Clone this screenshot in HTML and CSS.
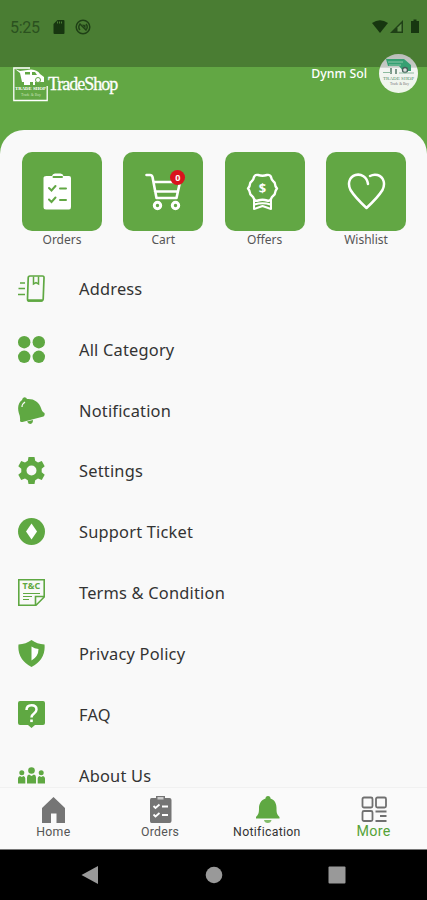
FILE: index.html
```html
<!DOCTYPE html>
<html lang="en">
<head>
    <meta charset="UTF-8">
    <meta name="viewport" content="width=device-width, initial-scale=1.0">
    <title>TradeShop</title>
    <link rel="stylesheet" href="styles.css">
</head>
<body>

    <div class="status-bar">
        <span class="time">5:25</span>
        <svg class="sd" width="12" height="14" viewBox="0 0 12 14"><path d="M4.500 0H10.500Q11.500 0 11.500 1V13Q11.500 14 10.500 14H1.500Q.5 14 .5 13V4Z" fill="#173610"/><path d="M4.500 1.500v2M6.500 1.500v2M8.500 1.500v2" stroke="#4a7d33"/></svg>
        <svg class="sync" width="16" height="16" viewBox="0 0 16 16" fill="none" stroke="#1f4016" stroke-width="1.500"><circle cx="8" cy="8" r="6.800"/><path d="M5 11A4 4 0 0 1 5.500 4.800M11 5A4 4 0 0 1 10.500 11.200M4.500 4.500L11.500 11.500"/><path d="M7 5.500L10.500 6V9.500Z" fill="#1f4016" stroke="none"/></svg>
        <svg class="signals" width="48" height="16" viewBox="0 0 48 16">
            <path d="M0 4Q8 -1.500 16 4L8 14Z" fill="#173610"/>
            <path d="M18 14L31 1V14Z" fill="#1f4016"/>
            <path d="M25.500 8.500L29.500 4.500V12.500H25.500Z" fill="#5c8b46"/>
            <path d="M39 2h2.500V.5h3V2H47V14H39Z" fill="#173610"/>
        </svg>
    </div>

    <header>
        <div class="logo">
            <svg width="35" height="35" viewBox="0 0 35 35">
                <path d="M17 1H.8V33.500H34.200V19" fill="none" stroke="#fff" stroke-width="1.300"/>
                <path d="M2 2L7 4L18 2.500Q25 3 27 7L31 10V15H9L7 6Z" fill="#fff"/>
                <path d="M12 5h5v2.500h-5zM19 5h3l2 3h-5z" fill="#62a744"/>
                <circle cx="25" cy="13" r="2.500" fill="#fff" stroke="#62a744"/>
                <path d="M11 14h6v4h-6zM20 14h2v4h-2z" fill="#fff"/>
                <text x="2" y="22.500" textLength="31" lengthAdjust="spacingAndGlyphs" class="logo-name">TRADE SHOP</text>
                <text x="8" y="28.500" textLength="20" lengthAdjust="spacingAndGlyphs" class="logo-tag">Trade &amp; Buy</text>
            </svg>
            <span>TradeShop</span>
        </div>
        <span class="user">Dynm Sol</span>
        <svg class="avatar" width="39" height="39" viewBox="0 0 39 39">
            <defs>
                <clipPath id="round"><circle cx="19.500" cy="19.500" r="19.500"/></clipPath>
                <linearGradient id="shade" x2="0" y2="1"><stop offset="0" stop-color="#babdba"/><stop offset=".34" stop-color="#c7cbc7"/><stop offset=".36" stop-color="#f3f5f3"/><stop offset="1" stop-color="#eef5ea"/></linearGradient>
            </defs>
            <g clip-path="url(#round)">
                <rect width="39" height="39" fill="url(#shade)"/>
                <path d="M7 5H25L32 11V17H24L20 12H9Z" fill="#35a072"/>
                <path d="M9 8h15M10 11h12" stroke="#8fc5a9"/>
                <path d="M12 14v6M17 15v5" stroke="#567a6a" stroke-width="1.500"/>
                <circle cx="26" cy="16" r="2.500" fill="#ddd" stroke="#46605a" stroke-width="1.300"/>
                <path d="M4 18.500h8M20 19h15" stroke="#8dbb9f"/>
                <text x="4" y="25.500" textLength="31" lengthAdjust="spacingAndGlyphs" class="avatar-name">TRADE SHOP</text>
                <text x="11" y="31" textLength="19" lengthAdjust="spacingAndGlyphs" class="avatar-tag">Trade &amp; Buy</text>
            </g>
        </svg>
    </header>

    <main>
        <div class="tiles">
            <div class="tile">
                <div class="box">
                    <svg width="40" height="40" viewBox="0 0 40 40"><path d="M4.500 4H10Q10.500 1.500 13 1.500H18.500Q21 1.500 21.500 4H27Q29 4 29 6V35Q29 37.500 27 37.500H4Q1.500 37.500 1.500 35V6Q1.500 4 4.500 4Z" fill="#fff"/><path d="M11.500 5H20" stroke="#62a744" stroke-width="2" stroke-linecap="round"/><path d="M7 16l2.500 2.500L13.500 14M7 27.500l2.500 2.500L13.500 25.500M18 16.500H24M18 28H24" fill="none" stroke="#62a744" stroke-width="2" stroke-linecap="round"/></svg>
                </div>
                <span>Orders</span>
            </div>
            <div class="tile">
                <div class="box">
                    <svg width="40" height="40" viewBox="0 0 40 40" fill="none" stroke="#fff" stroke-width="3" stroke-linecap="round" stroke-linejoin="round"><path d="M3.500 3H7Q9 3 9.500 5L13.500 26H33.500L37 10H10.500M12 19.500H34.500" stroke-width="2.600"/><circle cx="14.500" cy="33.500" r="3.200"/><circle cx="32.500" cy="33.500" r="3.200"/></svg>
                    <b class="count">0</b>
                </div>
                <span>Cart</span>
            </div>
            <div class="tile">
                <div class="box">
                    <svg width="40" height="40" viewBox="0 0 40 40" fill="none" stroke="#fff" stroke-width="2.400" stroke-linejoin="round"><path d="M13 3Q17.500 4.500 22 3Q25 2.500 26 5Q26.500 8 28.500 9.500Q30 10.500 30 12Q30 14 32 16.500Q30 19 30 21Q30 22.500 28.500 23.500Q26.500 25 26 27Q25 29.500 22 28.500Q17.500 27 13 28.500Q10 29.500 9 27Q8.500 25 6.500 23.500Q5 22.500 5 21Q5 19 3 16.500Q5 14 5 12Q5 10.500 6.500 9.500Q8.500 8 9 5Q10 2.500 13 3Z"/><path d="M9 26V37L17.500 34L26 37V26M9.500 32.500Q17.500 30 25.500 32.500" stroke-width="2"/><text x="17.500" y="21" text-anchor="middle" class="dollar">$</text></svg>
                </div>
                <span>Offers</span>
            </div>
            <div class="tile">
                <div class="box">
                    <svg width="40" height="40" viewBox="0 0 40 40" fill="none" stroke="#fff" stroke-width="2.500" stroke-linecap="round" stroke-linejoin="round"><path d="M22 12C21 5 15 1.500 9.500 3C3 5 1.500 12 4.500 18C7 22 13 29 20.500 36C28 29 34 22 36.500 18C39.500 12 38 5 31.500 3Q27.500 2 24 4"/></svg>
                </div>
                <span>Wishlist</span>
            </div>
        </div>

        <ul class="menu">
            <li>
                <svg viewBox="0 0 27 27"><g fill="none" stroke="#5fa842"><path d="M12 1H24.500Q26.200 1 26 3L25.200 24Q25 26 23 26H11Q9.500 26 9.500 24L10.200 3Q10.200 1 12 1Z" stroke-width="1.700"/><path d="M15.500 1.500V9L18 7.500L20.500 9V1.500" stroke-width="1.500"/><path d="M2 8H7M.5 13.500H7M0 19.500H7" stroke-width="1.700"/><path d="M10 25.500H24.500" stroke-width="2.500"/></g></svg>
                <span>Address</span>
            </li>
            <li>
                <svg viewBox="0 0 27 27"><circle cx="6.200" cy="6.200" r="6.200"/><circle cx="20.800" cy="6.200" r="6.200"/><circle cx="6.200" cy="20.800" r="6.200"/><circle cx="20.800" cy="20.800" r="6.200"/></svg>
                <span>All Category</span>
            </li>
            <li>
                <svg viewBox="0 0 27 27"><path d="M4 3Q4.500 .3 6.500 .2Q8.500 .3 9 2C16 1.500 21 5 23 11Q24 15 26.500 16Q27.200 18.500 25.500 19.500L4.500 25Q2 25.500 2 23.500Q2.500 20 .8 16C-.8 10 .5 5.500 4 3Z"/><path d="M9 24.500L15 23Q15 26.500 12.500 27Q10.500 27 9 24.500Z"/><path d="M4 10Q4 7 7 5" fill="none" stroke="#f9f9f9" stroke-width="1.300"/></svg>
                <span>Notification</span>
            </li>
            <li>
                <svg viewBox="0 0 27 27"><path fill-rule="evenodd" d="M10.500 0H16.500L17.200 3.800L20 5.400L23.800 4L26.700 9.200L23.700 11.800V15.200L26.700 17.800L23.800 23L20 21.600L17.200 23.200L16.500 27H10.500L9.800 23.200L7 21.600L3.200 23L.3 17.800L3.300 15.200V11.800L.3 9.200L3.200 4L7 5.400L9.800 3.800ZM13.500 8.500A5 5 0 1 0 13.500 18.500A5 5 0 1 0 13.500 8.500Z"/></svg>
                <span>Settings</span>
            </li>
            <li>
                <svg viewBox="0 0 27 27"><circle cx="13.500" cy="13.500" r="13.500"/><path d="M13.500 5.500L19 13.500L13.500 21.500L8 13.500Z" fill="#fff"/></svg>
                <span>Support Ticket</span>
            </li>
            <li>
                <svg viewBox="0 0 27 27"><path d="M.8.8H26.200V18L18 26.200H.8ZM26 17.500H17.500V26" fill="none" stroke="#5fa842" stroke-width="1.600"/><text x="4.500" y="10" textLength="18" lengthAdjust="spacingAndGlyphs" class="tc">T&amp;C</text><path d="M5 14.500H22M5 17.500H14M5 20.500H11" stroke="#5fa842" stroke-width="1.100"/></svg>
                <span>Terms &amp; Condition</span>
            </li>
            <li>
                <svg viewBox="0 0 27 27"><path d="M13.500 0Q19 4 26.500 4.500Q28 19 13.500 27Q-1 19 .5 4.500Q8 4 13.500 0Z"/><path d="M13.500 6.500Q16.500 8.500 20.500 9Q20.500 16.500 13.500 20.500Z" fill="#fff"/></svg>
                <span>Privacy Policy</span>
            </li>
            <li>
                <svg viewBox="0 0 27 27"><path d="M2 0H25Q27 0 27 2V22Q27 24 25 24H17L13.500 27L10 24H2Q0 24 0 22V2Q0 0 2 0Z"/><path d="M8.500 9Q8.500 4.200 13.500 4.200Q18.500 4.200 18.500 8.500Q18.500 10.500 16 12.500Q13.500 14.300 13.500 16.500" fill="none" stroke="#fff" stroke-width="2.500"/><rect x="12.200" y="18.500" width="2.600" height="2.600" fill="#fff"/></svg>
                <span>FAQ</span>
            </li>
            <li>
                <svg viewBox="0 0 27 27"><circle cx="13.500" cy="8.500" r="3.300"/><circle cx="3.800" cy="10.800" r="2.500"/><circle cx="23.200" cy="10.800" r="2.500"/><path d="M9 21.500V15.500Q9 13 11 12.500L13.500 14L16 12.500Q18 13 18 15.500V21.500ZM0 21.500V16.500Q0 14.500 2 14L3.800 15L5.500 14Q7.300 14.500 7.300 16.500V21.500ZM19.700 21.500V16.500Q19.700 14.500 21.500 14L23.200 15L25 14Q27 14.500 27 16.500V21.500Z"/></svg>
                <span>About Us</span>
            </li>
        </ul>
    </main>

    <nav>
        <div class="nav-item">
            <svg width="28" height="28" viewBox="0 0 28 28"><path d="M14.500 1L26 12V27H17.500V17.500H12V27H3V12Z" fill="#757575"/></svg>
            <span>Home</span>
        </div>
        <div class="nav-item">
            <svg width="28" height="28" viewBox="0 0 28 28"><path d="M5.500 2H10V0H19V2H23.500Q25.500 2 25.500 4V25Q25.500 27 23.500 27H5.500Q4 27 4 25V4Q4 2 5.500 2Z" fill="#757575"/><path d="M11.500 1H17.500V3.500H11.500Z" fill="#ccc"/><path d="M7.500 10l2 2L13.500 8.500M7.500 18.500l2 2L13.500 17M16 10.500H22M16 19H22" stroke="#fff" stroke-width="1.800" fill="none"/></svg>
            <span>Orders</span>
        </div>
        <div class="nav-item dark">
            <svg width="28" height="28" viewBox="0 0 28 28"><path d="M15 0Q17.500 0 17.500 2.500C22 4 23.500 8 23.500 12C23.500 17 24 18.500 26.500 21V22.500H3V21C5.500 18.500 6 17 6 12C6 8 8 4 12.500 2.500Q12.500 0 15 0Z" fill="#5fa842"/><path d="M11 24H18.500Q18 27 14.800 27Q11.500 27 11 24Z" fill="#83bd6c"/></svg>
            <span>Notification</span>
        </div>
        <div class="nav-item active">
            <svg width="28" height="28" viewBox="0 0 28 28" fill="none" stroke="#707070" stroke-width="1.800"><rect x="2.500" y="1.500" width="10" height="10" rx="1.500"/><rect x="16" y="1.500" width="10" height="10" rx="1.500"/><rect x="2.500" y="15" width="10" height="10" rx="1.500"/><path d="M15.500 15.500H26.500M20 20H26.500M15.500 25H26.500"/></svg>
            <span>More</span>
        </div>
    </nav>

    <div class="system-nav">
        <svg width="18" height="20" viewBox="0 0 18 20"><path d="M.5 10L17 1V19Z"/></svg>
        <svg width="18" height="18" viewBox="0 0 18 18"><circle cx="9" cy="9" r="8.300"/></svg>
        <svg width="18" height="18" viewBox="0 0 18 18"><rect x=".5" y=".5" width="17" height="17" rx="1"/></svg>
    </div>

</body>
</html>
```

FILE: styles.css
```css
* {
    box-sizing: border-box;
}

body {
    margin: 0;
    height: 900px;
    display: flex;
    flex-direction: column;
    overflow: hidden;
    background-color: #62a744;
    font-family: 'Noto Sans', 'Open Sans', sans-serif;
    color: #333;
}

svg {
    display: block;
    flex-shrink: 0;
}

.status-bar {
    height: 67px;
    flex-shrink: 0;
    display: flex;
    align-items: center;
    padding: 0 7px 13px 10px;
    background-color: #4a7d33;
}

.time {
    width: 43px;
    font-family: Roboto, sans-serif;
    font-size: 16px;
    letter-spacing: -0.3px;
    color: #2b511f;
}

.sync {
    margin-left: 10px;
}

.signals {
    margin-left: auto;
}

header {
    height: 63px;
    flex-shrink: 0;
    display: flex;
    align-items: flex-start;
    padding: 0 9px 0 13px;
    color: white;
}

.logo {
    display: flex;
    align-items: center;
    margin-right: auto;
}

.logo span {
    font-family: 'Liberation Serif', serif;
    font-size: 18px;
    letter-spacing: -1px;
    padding-bottom: 1px;
    -webkit-text-stroke: 0.3px white;
}

.logo-name {
    font: bold 5px 'Liberation Serif', serif;
    fill: white;
}

.logo-tag {
    font: 3.5px 'Liberation Serif', serif;
    fill: #c5e0b8;
}

.user {
    font-size: 12.3px;
    font-weight: 500;
    line-height: 14px;
    margin-right: 12px;
}

.avatar {
    margin-top: -13px;
}

.avatar-name {
    font: 5px 'Liberation Serif', serif;
    fill: #4d8b68;
}

.avatar-tag {
    font: 3.5px 'Liberation Serif', serif;
    fill: #777;
}

main {
    flex: 1;
    min-height: 0;
    overflow: hidden;
    padding: 22px 21px 0 22px;
    background-color: #f9f9f9;
    border-radius: 24px 24px 0 0;
}

.tiles {
    display: flex;
    justify-content: space-between;
}

.tile {
    width: 80px;
    text-align: center;
    font-size: 12px;
    line-height: 18px;
    color: #555;
}

.box {
    position: relative;
    height: 79px;
    padding: 20px 0 0 20px;
    background-color: #62a744;
    border-radius: 10px;
}

.tile span {
    display: block;
}

.count {
    position: absolute;
    top: 18px;
    left: 47px;
    width: 15px;
    height: 15px;
    border-radius: 50%;
    background-color: #d9131e;
    color: white;
    font-size: 9px;
    line-height: 15px;
}

.dollar {
    font: bold 13px 'Noto Sans', sans-serif;
    fill: white;
    stroke: none;
}

.menu {
    list-style: none;
    margin: 9px 0 0 -4px;
    padding: 0;
}

.menu li {
    display: flex;
    align-items: center;
    height: 60.85px;
    font-size: 16.4px;
    letter-spacing: 0.2px;
}

.menu svg {
    width: 27px;
    height: 27px;
    margin-right: 34px;
    fill: #5fa842;
}

.tc {
    font: bold 8px 'Noto Sans', sans-serif;
}

nav {
    height: 62px;
    flex-shrink: 0;
    display: flex;
    background-color: #fafafa;
    border-top: 1px solid #f1f1f1;
    padding-top: 8px;
}

.nav-item {
    flex: 1;
    display: flex;
    flex-direction: column;
    align-items: center;
    font-family: Roboto, sans-serif;
    font-size: 12.3px;
    line-height: 17px;
    letter-spacing: 0.3px;
    color: #555;
}

.dark {
    color: #333;
}

.active {
    font-size: 14.3px;
    line-height: 15px;
    color: #55a338;
}

.system-nav {
    height: 51px;
    flex-shrink: 0;
    display: flex;
    align-items: center;
    justify-content: space-between;
    padding: 0 81px 0 81px;
    background-color: black;
    border-top: 1px solid #777;
    fill: #999;
}
```
